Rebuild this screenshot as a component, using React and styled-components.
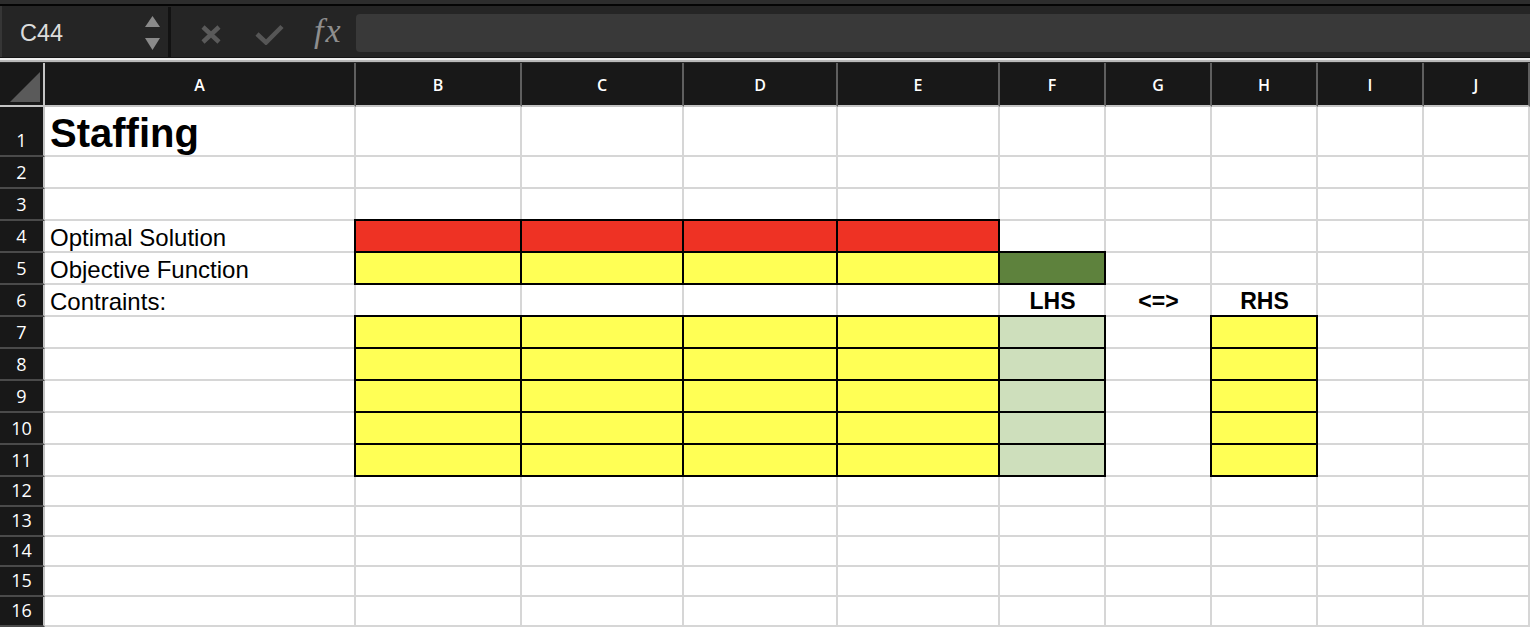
import React from 'react';
import styled, { createGlobalStyle } from 'styled-components';

const GlobalStyle = createGlobalStyle`
  html, body { margin: 0; padding: 0; background: #ffffff; }
  body { font-family: "Liberation Sans", Arial, sans-serif; overflow: hidden; }
  * { box-sizing: border-box; }
`;

const Page = styled.div`
  width: 1530px;
  height: 628px;
  display: flex;
  flex-direction: column;
  background: #ffffff;
`;

const TopStrip = styled.div`
  height: 4px;
  background: #2d2d2d;
`;

const Toolbar = styled.div`
  height: 53px;
  border-top: 2px solid #050505;
  background: #252525;
  display: flex;
  align-items: center;
  padding-top: 3px;
`;

const NameBox = styled.div`
  width: 168px;
  align-self: stretch;
  display: flex;
  align-items: center;
  padding-left: 18px;
  padding-right: 8px;
  border-left: 2px solid #363636;
  margin-top: -3px;
  padding-top: 3px;
  font-family: "Liberation Sans", Arial, sans-serif;
  font-size: 23.5px;
  color: #dcdcdc;
`;

const NameText = styled.span`
  flex: 1;
`;

const Separator = styled.div`
  width: 3px;
  height: 50px;
  margin-top: -3px;
  background: #121212;
`;

const IconSlot = styled.div`
  display: flex;
  align-items: center;
  margin-left: ${(p) => p.$gap}px;
  margin-top: 2px;
`;

const Fx = styled.span`
  margin-left: 30px;
  font-family: "Liberation Serif", "Times New Roman", serif;
  font-style: italic;
  font-size: 34px;
  letter-spacing: 2px;
  line-height: 1;
  color: #8e8e8e;
  margin-top: -4px;
`;

const FormulaInput = styled.div`
  flex: 1;
  height: 38px;
  margin-left: 13px;
  background: #393939;
  border-radius: 4px 0 0 4px;
`;

const Divider = styled.div`
  height: 6px;
  background: linear-gradient(
    to bottom,
    #151515 0px, #151515 1px,
    #efefef 1px, #efefef 3px,
    #b9b9b9 3px, #b9b9b9 5px,
    #2a2a2a 5px, #2a2a2a 6px
  );
`;

const Sheet = styled.div`
  display: grid;
  grid-template-columns: 45px 311px 166px 162px 154px 162px 106px 106px 106px 106px 1fr;
  grid-template-rows: 44px 50px repeat(10, 32px) repeat(5, 30px);
  background: #ffffff;
`;

const Corner = styled.div`
  background: #181818;
  border-right: 2px solid #c4c4c4;
  border-bottom: 2px solid #c4c4c4;
  display: flex;
  align-items: flex-end;
  justify-content: flex-end;
  padding: 0 3px 3px 0;
`;

const ColHeader = styled.div`
  background: #181818;
  border-right: 2px solid #5f5f5f;
  border-bottom: 2px solid #c4c4c4;
  display: flex;
  align-items: center;
  justify-content: center;
  font-family: "Open Sans", "Noto Sans", sans-serif;
  font-size: 16px;
  font-weight: 600;
  color: #ffffff;
  padding-top: 2px;
`;

const RowHeader = styled.div`
  background: #181818;
  border-right: 2px solid #c4c4c4;
  border-bottom: 2px solid #4a4a4a;
  display: flex;
  align-items: flex-end;
  justify-content: center;
  padding-bottom: 2px;
  font-family: "Open Sans", "Noto Sans", sans-serif;
  font-size: 18px;
  font-weight: 500;
  color: #ffffff;
  line-height: 25px;
`;

const Cell = styled.div`
  border-right: 2px solid #d6d6d6;
  border-bottom: 2px solid #d6d6d6;
  display: flex;
  align-items: flex-end;
  justify-content: ${(p) => (p.$center ? 'center' : 'flex-start')};
  padding: 0 4px 0 5px;
  font-family: "Liberation Sans", Arial, sans-serif;
  font-size: ${(p) => (p.$title ? '40px' : p.$bold ? '23px' : '24px')};
  font-weight: ${(p) => (p.$bold ? 700 : 400)};
  line-height: ${(p) => (p.$title ? '43px' : '27px')};
  color: #000000;
  white-space: nowrap;
  overflow: visible;
  ${(p) =>
    p.$fill &&
    `
    background: ${p.$fill};
    border: 2px solid #000000;
    margin: -2px 0 0 -2px;
    position: relative;
    z-index: 1;
  `}
`;

const RED = '#ee3224';
const YELLOW = '#ffff55';
const DARK_GREEN = '#5e823d';
const LIGHT_GREEN = '#cedfbc';

const COLS = ['A', 'B', 'C', 'D', 'E', 'F', 'G', 'H', 'I', 'J'];

function cellSpec(row, col) {
  const bToE = ['B', 'C', 'D', 'E'].includes(col);
  if (row === 1 && col === 'A') return { text: 'Staffing', bold: true, title: true };
  if (row === 4) {
    if (col === 'A') return { text: 'Optimal Solution' };
    if (bToE) return { fill: RED };
  }
  if (row === 5) {
    if (col === 'A') return { text: 'Objective Function' };
    if (bToE) return { fill: YELLOW };
    if (col === 'F') return { fill: DARK_GREEN };
  }
  if (row === 6) {
    if (col === 'A') return { text: 'Contraints:' };
    if (col === 'F') return { text: 'LHS', bold: true, center: true };
    if (col === 'G') return { text: '<=>', bold: true, center: true };
    if (col === 'H') return { text: 'RHS', bold: true, center: true };
  }
  if (row >= 7 && row <= 11) {
    if (bToE) return { fill: YELLOW };
    if (col === 'F') return { fill: LIGHT_GREEN };
    if (col === 'H') return { fill: YELLOW };
  }
  return {};
}

const StepperIcon = () => (
  <svg width="15" height="35" viewBox="0 0 15 35">
    <polygon points="7.5,0 15,11 0,11" fill="#8a8a8a" />
    <polygon points="0,22 15,22 7.5,34" fill="#8a8a8a" />
  </svg>
);

const CrossIcon = () => (
  <svg width="20" height="19" viewBox="0 0 20 19">
    <path d="M2 2 L18 17 M18 2 L2 17" stroke="#5a5a5a" strokeWidth="4.5" strokeLinecap="butt" />
  </svg>
);

const CheckIcon = () => (
  <svg width="29" height="21" viewBox="0 0 29 21">
    <path d="M2 10 L11 18.5 L27 2.5" stroke="#565656" strokeWidth="4.5" fill="none" strokeLinejoin="miter" />
  </svg>
);

const CornerIcon = () => (
  <svg width="30" height="30" viewBox="0 0 30 30">
    <polygon points="0,30 30,30 30,0" fill="#5a5a5a" />
  </svg>
);

export default function App() {
  const rows = Array.from({ length: 16 }, (_, i) => i + 1);
  return (
    <Page>
      <GlobalStyle />
      <TopStrip />
      <Toolbar>
        <NameBox>
          <NameText>C44</NameText>
          <StepperIcon />
        </NameBox>
        <Separator />
        <IconSlot $gap={30}>
          <CrossIcon />
        </IconSlot>
        <IconSlot $gap={34}>
          <CheckIcon />
        </IconSlot>
        <Fx>fx</Fx>
        <FormulaInput />
      </Toolbar>
      <Divider />
      <Sheet>
        <Corner>
          <CornerIcon />
        </Corner>
        {COLS.map((c) => (
          <ColHeader key={c}>{c}</ColHeader>
        ))}
        {rows.map((r) => (
          <React.Fragment key={r}>
            <RowHeader>{r}</RowHeader>
            {COLS.map((c) => {
              const s = cellSpec(r, c);
              return (
                <Cell
                  key={c}
                  $fill={s.fill}
                  $bold={s.bold}
                  $title={s.title}
                  $center={s.center}
                >
                  {s.text}
                </Cell>
              );
            })}
          </React.Fragment>
        ))}
      </Sheet>
    </Page>
  );
}
